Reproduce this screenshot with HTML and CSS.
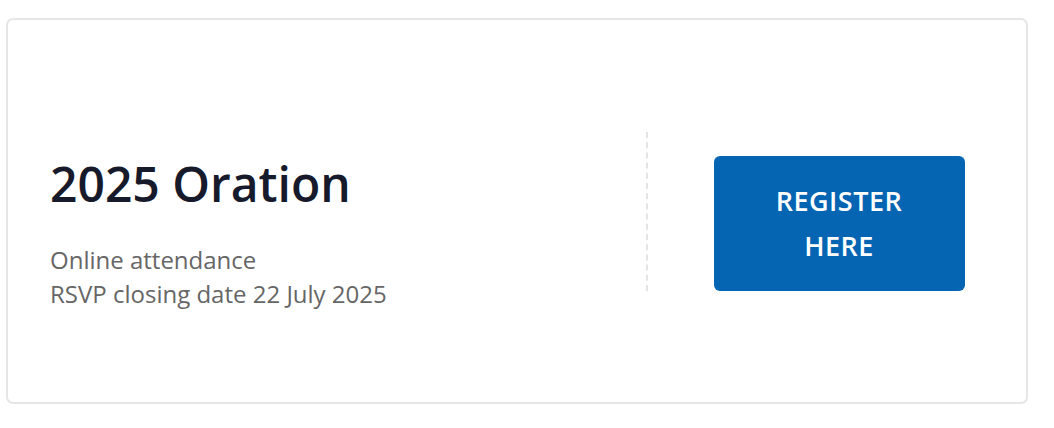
FILE: index.html
```html
<!DOCTYPE html>
<html>
<head>
<meta charset="utf-8">
<link rel="stylesheet" href="styles.css">
</head>
<body>
<div class="card">
  <div class="info">
    <h2 class="title">2025 Oration</h2>
    <p class="meta">Online attendance<br>RSVP closing date 22 July 2025</p>
  </div>
  <div class="divider"></div>
  <div class="action">
    <a class="btn" href="#">REGISTER<br>HERE</a>
  </div>
</div>
</body>
</html>
```

FILE: styles.css
```css
* { box-sizing: border-box; }
html, body { margin: 0; padding: 0; background: #fff; }
body { font-family: "Open Sans", "Noto Sans", sans-serif; }
.card {
  margin: 18px 0 0 6px;
  width: 1022px;
  height: 386px;
  border: 2px solid #e6e6e6;
  border-radius: 7px;
  display: flex;
  align-items: center;
}
.info {
  flex: 1;
  padding-left: 42px;
  padding-top: 44px;
}
.title {
  margin: 0;
  font-size: 48px;
  font-weight: 600;
  color: #171a2b;
  line-height: 1.2;
}
.meta {
  margin: 31px 0 0;
  font-size: 24px;
  line-height: 34px;
  color: #666;
}
.divider {
  width: 0;
  height: 159px;
  border-left: 2px dashed #e4e4e4;
}
.action {
  width: 378px;
  height: 159px;
  padding-left: 4px;
  display: flex;
  justify-content: center;
  align-items: flex-end;
}
.btn {
  display: flex;
  align-items: center;
  justify-content: center;
  width: 251px;
  height: 135px;
  background: #0565b3;
  color: #fff;
  border-radius: 6px;
  text-decoration: none;
  text-align: center;
  font-size: 27px;
  font-weight: 600;
  letter-spacing: 0.5px;
  line-height: 45px;
}
```
